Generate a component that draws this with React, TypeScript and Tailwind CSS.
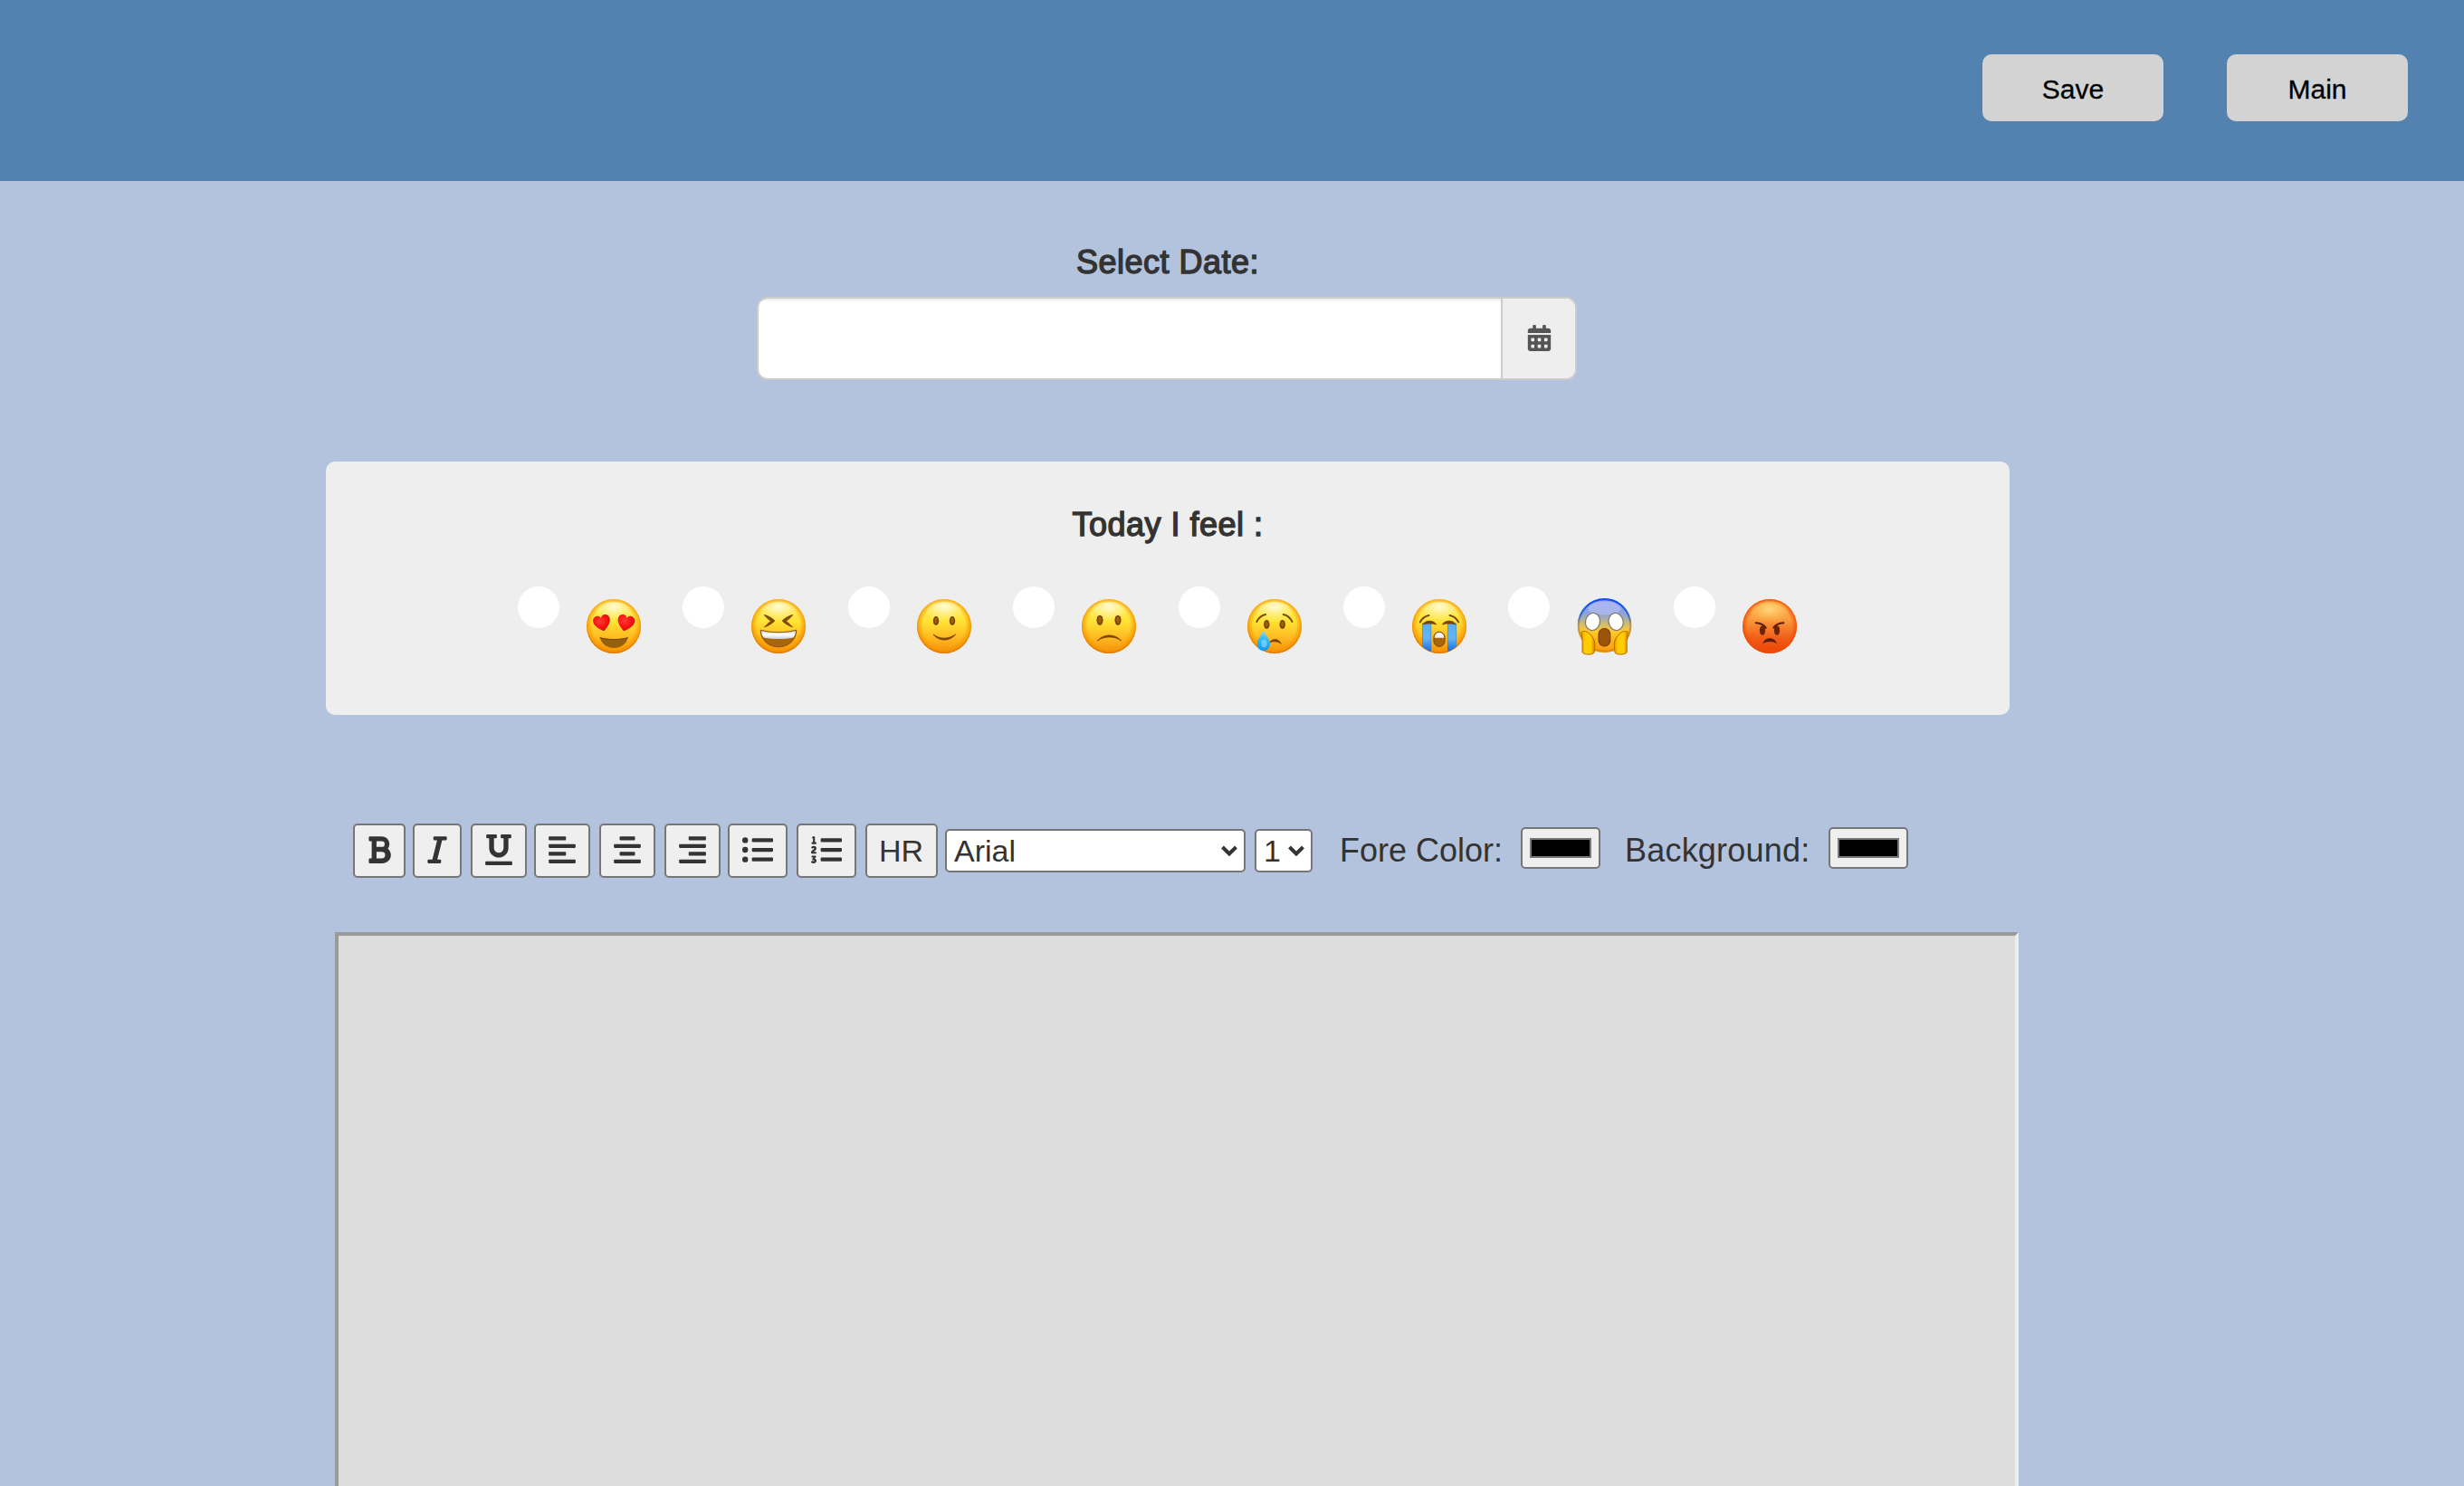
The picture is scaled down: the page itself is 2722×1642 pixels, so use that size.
import type { ReactNode } from "react";
import {
  FaAlignCenter,
  FaAlignLeft,
  FaAlignRight,
  FaBold,
  FaCalendarAlt,
  FaItalic,
  FaListOl,
  FaListUl,
  FaUnderline,
} from "react-icons/fa";

const BROWN = "#7a4300";

/* Shared gradients for the mood faces. */
function FaceDefs() {
  return (
    <svg className="absolute size-0" aria-hidden="true">
      <defs>
        <linearGradient id="yellow" x1="0" y1="0" x2="0" y2="1">
          <stop offset="0" stopColor="#fff06a" />
          <stop offset="0.42" stopColor="#ffe233" />
          <stop offset="0.72" stopColor="#ffb820" />
          <stop offset="1" stopColor="#f5900c" />
        </linearGradient>
        <radialGradient id="rim" cx="0.5" cy="0.48" r="0.52">
          <stop offset="0.74" stopColor="#f79a00" stopOpacity="0" />
          <stop offset="0.9" stopColor="#f79600" stopOpacity="0.65" />
          <stop offset="1" stopColor="#dc7400" stopOpacity="1" />
        </radialGradient>
        <radialGradient id="shine" cx="0.5" cy="0.2" r="0.6">
          <stop offset="0" stopColor="#fffbe0" stopOpacity="0.95" />
          <stop offset="1" stopColor="#fff59a" stopOpacity="0" />
        </radialGradient>
        <linearGradient id="scream" x1="0" y1="0" x2="0" y2="1">
          <stop offset="0" stopColor="#8f9ff5" />
          <stop offset="0.28" stopColor="#8ea2dc" />
          <stop offset="0.5" stopColor="#d9bf62" />
          <stop offset="0.62" stopColor="#ffc928" />
          <stop offset="1" stopColor="#f9990f" />
        </linearGradient>
        <linearGradient id="screamRim" x1="0" y1="0" x2="0" y2="1">
          <stop offset="0" stopColor="#0f4dff" />
          <stop offset="0.3" stopColor="#2c6fd8" />
          <stop offset="0.5" stopColor="#c79a38" />
          <stop offset="1" stopColor="#e58a0a" />
        </linearGradient>
        <linearGradient id="angry" x1="0" y1="0" x2="0" y2="1">
          <stop offset="0" stopColor="#ffb84a" />
          <stop offset="0.35" stopColor="#fb9f40" />
          <stop offset="0.7" stopColor="#f2601a" />
          <stop offset="1" stopColor="#e93f04" />
        </linearGradient>
        <radialGradient id="angryRim" cx="0.5" cy="0.5" r="0.5">
          <stop offset="0.8" stopColor="#f4580c" stopOpacity="0" />
          <stop offset="1" stopColor="#ee4a06" stopOpacity="0.9" />
        </radialGradient>
        <radialGradient id="angryShine" cx="0.5" cy="0.35" r="0.6">
          <stop offset="0" stopColor="#ffdc80" stopOpacity="0.95" />
          <stop offset="1" stopColor="#ffc060" stopOpacity="0" />
        </radialGradient>
        <radialGradient id="heart" cx="0.4" cy="0.35" r="0.7">
          <stop offset="0" stopColor="#ff3b35" />
          <stop offset="0.6" stopColor="#f5100f" />
          <stop offset="1" stopColor="#d10a12" />
        </radialGradient>
        <linearGradient id="tear" x1="0" y1="0" x2="0" y2="1">
          <stop offset="0" stopColor="#9adcf8" />
          <stop offset="0.45" stopColor="#35b9f7" />
          <stop offset="1" stopColor="#0a98f0" />
        </linearGradient>
        <linearGradient id="stream" x1="0" y1="0" x2="0" y2="1">
          <stop offset="0" stopColor="#58aef0" />
          <stop offset="0.5" stopColor="#62b4f8" />
          <stop offset="1" stopColor="#0a5fdc" />
        </linearGradient>
        <linearGradient id="hand" x1="0" y1="0" x2="1" y2="0">
          <stop offset="0" stopColor="#e99a00" />
          <stop offset="0.3" stopColor="#ffcf00" />
          <stop offset="0.7" stopColor="#ffcc00" />
          <stop offset="1" stopColor="#d98200" />
        </linearGradient>
        <linearGradient id="teeth" x1="0" y1="0" x2="0" y2="1">
          <stop offset="0" stopColor="#d5d8e0" />
          <stop offset="0.5" stopColor="#ffffff" />
          <stop offset="1" stopColor="#c9cdd8" />
        </linearGradient>
        <clipPath id="faceClip">
          <circle cx="30" cy="30" r="29.5" />
        </clipPath>
      </defs>
    </svg>
  );
}

function YellowFace({ children }: { children: ReactNode }) {
  return (
    <svg viewBox="0 0 60 60" className="size-full overflow-visible">
      <circle cx="30" cy="30" r="30" fill="url(#yellow)" />
      <circle cx="30" cy="30" r="30" fill="url(#rim)" />
      <ellipse cx="30" cy="17" rx="21" ry="14" fill="url(#shine)" />
      {children}
    </svg>
  );
}

function Eye({ cx, cy, rx = 3.2, ry = 5.1 }: { cx: number; cy: number; rx?: number; ry?: number }) {
  return (
    <g>
      <ellipse cx={cx} cy={cy} rx={rx} ry={ry} fill={BROWN} />
      <ellipse cx={cx} cy={cy - 0.4} rx={rx - 1.6} ry={ry - 2} fill="#a05f08" />
    </g>
  );
}

function Line({ d, width = 1.8 }: { d: string; width?: number }) {
  return (
    <path d={d} fill="none" stroke={BROWN} strokeWidth={width} strokeLinecap="round" strokeLinejoin="round" />
  );
}

const HEART =
  "M0 9.2C-3.5 6.4-9.4 2-9.4-3.2C-9.4-6.6-7-8.6-4.4-8.6C-2.3-8.6-.8-7.5 0-5.6C.8-7.5 2.3-8.6 4.4-8.6C7-8.6 9.4-6.6 9.4-3.2C9.4 2 3.5 6.4 0 9.2Z";

const HeartEyes = () => (
  <YellowFace>
    <path d={HEART} transform="translate(17.2 26.4) rotate(-13)" fill="url(#heart)" />
    <path d={HEART} transform="translate(43.2 26.4) rotate(13)" fill="url(#heart)" />
    <path d="M14.7 42.6C24 45 36.5 45 45.7 42.6C44 50 37.5 54 30.2 54C23 54 16.5 50 14.7 42.6Z" fill="#95600c" />
    <path d="M14.7 42.6C24 45.2 36.5 45.2 45.7 42.6" fill="none" stroke={BROWN} strokeWidth="1" />
  </YellowFace>
);

const Laughing = () => (
  <YellowFace>
    <path d="M14 17.3C18.5 18.2 22.5 20.5 26 24C22.5 27.5 18.5 29.8 14.3 31C16.5 28.5 19 26.2 21.5 24.2C18.7 22.5 16 20 14 17.3Z" fill="#80490a" stroke={BROWN} strokeWidth="0.6" />
    <path d="M46 17.3C41.5 18.2 37.5 20.5 34 24C37.5 27.5 41.5 29.8 45.7 31C43.5 28.5 41 26.2 38.5 24.2C41.3 22.5 44 20 46 17.3Z" fill="#80490a" stroke={BROWN} strokeWidth="0.6" />
    <path d="M10.2 34.2C22 37.5 38 37.5 49.8 34.2C49.5 46 40.5 52.8 30 52.8C19.5 52.8 10.5 46 10.2 34.2Z" fill="#a9650a" stroke={BROWN} strokeWidth="0.8" />
    <path d="M11 35C22 38 38 38 49 35C48.8 38 48 40.5 46.5 42.5C36 44.6 24 44.6 13.5 42.5C12 40.5 11.2 38 11 35Z" fill="url(#teeth)" />
  </YellowFace>
);

const Smiling = () => (
  <YellowFace>
    <Eye cx={21} cy={24} />
    <Eye cx={39} cy={24} />
    <path d="M18 39C25 44.6 35 44.6 42.5 39C36 47 24.5 47 18 39Z" fill={BROWN} stroke={BROWN} strokeWidth="0.9" />
  </YellowFace>
);

const Frowning = () => (
  <YellowFace>
    <Eye cx={20} cy={23.3} rx={3.5} ry={5.6} />
    <Eye cx={40} cy={23.3} rx={3.5} ry={5.6} />
    <path d="M17.3 46C24.5 38 36.5 38 43.7 46C36 40.5 25 40.5 17.3 46Z" fill={BROWN} stroke={BROWN} strokeWidth="0.8" />
  </YellowFace>
);

const Crying = () => (
  <YellowFace>
    <Line d="M10.3 25C12.5 20.5 15.5 17.8 20.2 17" />
    <Line d="M49.5 25C47.3 20.5 44.3 17.8 39.6 17" />
    <Eye cx={21.3} cy={28} />
    <Eye cx={38.7} cy={28} />
    <path d="M24 48.5C26 42.5 35.5 42.3 38 50.3C34 46.5 29 46.5 24 48.5Z" fill={BROWN} />
    <path d="M17.7 33.8C19.5 40 25 44 25 49.5C25 54 21.7 57 17.8 57C13.8 57 10.7 54 10.7 49.5C10.7 44 16 40 17.7 33.8Z" fill="url(#tear)" />
    <ellipse cx="18.5" cy="49" rx="3.2" ry="4.5" fill="#7ed5fb" opacity="0.75" />
  </YellowFace>
);

const Sobbing = () => (
  <YellowFace>
    <g clipPath="url(#faceClip)">
      <rect x="11.3" y="27" width="9.6" height="33" fill="url(#stream)" stroke="#4a80b0" strokeWidth="0.6" />
      <rect x="39.2" y="27" width="9.6" height="33" fill="url(#stream)" stroke="#4a80b0" strokeWidth="0.6" />
    </g>
    <Line d="M8.7 25.5C11 21.3 14 18.7 18.5 18" />
    <Line d="M51.3 25.5C49 21.3 46 18.7 41.5 18" />
    <path d="M11.7 28C14.5 22.8 24 22.8 26.7 28.2C22 26.6 16.5 26.6 11.7 28Z" fill={BROWN} stroke={BROWN} strokeWidth="0.6" />
    <path d="M48.3 28C45.5 22.8 36 22.8 33.3 28.2C38 26.6 43.5 26.6 48.3 28Z" fill={BROWN} stroke={BROWN} strokeWidth="0.6" />
    <rect x="23.9" y="36.2" width="12.2" height="16.2" rx="6" fill="#a9650a" stroke="#7f4a08" strokeWidth="1" />
    <path d="M24.8 42.8C24.8 39 27 37 30 37C33 37 35.2 39 35.2 42.8Z" fill="#f5f5f7" />
  </YellowFace>
);

const Screaming = () => (
  <svg viewBox="0 0 60 60" className="size-full overflow-visible">
    <g transform="translate(0.8 0)">
      <circle cx="29.7" cy="29" r="28.8" fill="url(#scream)" stroke="url(#screamRim)" strokeWidth="2.2" />
      <ellipse cx="29.7" cy="10" rx="18" ry="7.5" fill="#d9dcff" opacity="0.35" />
      <ellipse cx="16.7" cy="25" rx="8" ry="9.6" transform="rotate(14 16.7 25)" fill="#fff" stroke="#837d69" strokeWidth="1.3" />
      <ellipse cx="42.3" cy="25" rx="8" ry="9.6" transform="rotate(-14 42.3 25)" fill="#fff" stroke="#837d69" strokeWidth="1.3" />
      <rect x="23.2" y="32.5" width="12.8" height="19.5" rx="6.2" fill="#9c5207" stroke="#7a3f04" strokeWidth="1.1" />
      <path d="M4 36.5C6 34.5 11 35.5 14 39C18 43.5 19.5 47 19 52L18.5 58.5C18 62 6 62 5.2 58.5C5 51 6 44 4 36.5Z" fill="url(#hand)" stroke="#b86b00" strokeWidth="1" />
      <path d="M55.6 36.5C53.6 34.5 48.6 35.5 45.6 39C41.6 43.5 40.1 47 40.6 52L41.1 58.5C41.6 62 53.6 62 54.4 58.5C54.6 51 53.6 44 55.6 36.5Z" fill="url(#hand)" stroke="#b86b00" strokeWidth="1" />
    </g>
  </svg>
);

const Angry = () => (
  <svg viewBox="0 0 60 60" className="size-full overflow-visible">
    <circle cx="30" cy="30" r="30" fill="url(#angry)" />
    <circle cx="30" cy="30" r="30" fill="url(#angryRim)" />
    <ellipse cx="30" cy="15" rx="21" ry="12.5" fill="url(#angryShine)" />
    <ellipse cx="22" cy="34.5" rx="3.2" ry="5.2" fill="#6b2408" />
    <ellipse cx="38" cy="34.5" rx="3.2" ry="5.2" fill="#6b2408" />
    <path d="M14.7 26.3C19.5 26.6 23.5 28.3 25.8 31.7" fill="none" stroke="#5d1d05" strokeWidth="2" strokeLinecap="round" />
    <path d="M45.3 26.3C40.5 26.6 36.5 28.3 34.2 31.7" fill="none" stroke="#5d1d05" strokeWidth="2" strokeLinecap="round" />
    <path d="M22.3 49.2C24.5 41.2 35.5 41.2 38 49.2C33.5 46.2 27 46.2 22.3 49.2Z" fill="#5d1d05" />
  </svg>
);

const MOODS = [HeartEyes, Laughing, Smiling, Frowning, Crying, Sobbing, Screaming, Angry];

function ToolButton({ className, children }: { className: string; children: ReactNode }) {
  return (
    <button
      type="button"
      className={`flex h-[60px] shrink-0 items-center justify-center rounded-[5px] border-2 border-[#767676] bg-[#efefef] text-[34px] leading-none text-[#333] ${className}`}
    >
      {children}
    </button>
  );
}

function Chevron() {
  return (
    <svg viewBox="0 0 20 14" className="h-[14px] w-[20px] shrink-0">
      <path d="M2.5 3L10 10.5L17.5 3" fill="none" stroke="#333" strokeWidth="4" />
    </svg>
  );
}

function Dropdown({ value, className }: { value: string; className: string }) {
  return (
    <div
      className={`mt-[6px] flex h-12 shrink-0 items-center justify-between rounded-[5px] border-2 border-[#767676] bg-white text-[34px] leading-[44px] ${className}`}
    >
      <span>{value}</span>
      <Chevron />
    </div>
  );
}

function ColorInput() {
  return (
    <button
      type="button"
      className="mt-1 flex h-[46px] w-[88px] shrink-0 items-center justify-center rounded-[5px] border-2 border-[#767676] bg-[#efefef]"
    >
      <span className="h-[22px] w-[68px] border-2 border-[#777] bg-black" />
    </button>
  );
}

export default function App() {
  return (
    <div className="flex h-[1642px] w-full flex-col overflow-hidden bg-[#b3c3dd] font-['Liberation_Sans',Arial,sans-serif] text-[#333]">
      <header className="flex h-[200px] shrink-0 justify-end gap-[70px] bg-[#5382b1] pt-[60px] pr-[62px]">
        {["Save", "Main"].map((label) => (
          <button
            key={label}
            type="button"
            className="h-[74px] w-[200px] rounded-[10px] bg-[#d3d3d3] pt-[4px] text-[30px] leading-none text-black [-webkit-text-stroke:0.3px_#000]"
          >
            {label}
          </button>
        ))}
      </header>

      <main className="ml-[360px] flex w-[1860px] flex-col">
        <section className="flex flex-col items-center pt-[70px]">
          <label className="h-10 text-[36px] leading-10 tracking-[0.5px] [-webkit-text-stroke:1.4px_#333]">
            Select Date:
          </label>
          <div className="mt-[18px] mr-[2px] flex h-[92px] w-[906px] overflow-hidden rounded-[12px] border-2 border-[#ccc] bg-white">
            <div className="flex-1 shadow-[inset_0_2px_2px_rgba(0,0,0,0.075)]" />
            <div className="flex w-[82px] items-center justify-center border-l-2 border-[#ccc] bg-[#eee] pb-[1px] text-[29px] text-[#555]">
              <FaCalendarAlt />
            </div>
          </div>
        </section>

        <section className="mt-[90px] flex h-[280px] flex-col rounded-[10px] bg-[#eee] pt-[50px]">
          <h2 className="h-10 text-center text-[36px] leading-10 tracking-[0.5px] [-webkit-text-stroke:1.4px_#333]">
            Today I feel :
          </h2>
          <FaceDefs />
          <div className="mt-12 ml-[212px] flex">
            {MOODS.map((Mood, i) => (
              <label key={i} className="flex w-[182.4px] shrink-0">
                <span className="size-[46px] rounded-full bg-white" />
                <span className="mt-[14px] ml-[30px] size-[60px]">
                  <Mood />
                </span>
              </label>
            ))}
          </div>
        </section>

        <section className="mt-[120px] ml-[30px] flex h-[60px] items-start">
          <ToolButton className="w-[58px] pb-[2px]"><FaBold /></ToolButton>
          <ToolButton className="ml-2 w-[54px] pb-[2px]"><FaItalic /></ToolButton>
          <ToolButton className="ml-[10px] w-[62px] pb-[2px]"><FaUnderline /></ToolButton>
          <ToolButton className="ml-2 w-[62px] pb-[2px]"><FaAlignLeft /></ToolButton>
          <ToolButton className="ml-[10px] w-[62px] pb-[2px]"><FaAlignCenter /></ToolButton>
          <ToolButton className="ml-[10px] w-[62px] pb-[2px]"><FaAlignRight /></ToolButton>
          <ToolButton className="ml-2 w-[66px] pb-[2px]"><FaListUl /></ToolButton>
          <ToolButton className="ml-[10px] w-[66px] pb-[2px]"><FaListOl /></ToolButton>
          <ToolButton className="ml-[10px] w-[80px] pr-[1px]">HR</ToolButton>
          <Dropdown value="Arial" className="ml-2 w-[332px] pr-[6px] pl-[8px]" />
          <Dropdown value="1" className="ml-[10px] w-[64px] pr-[6px] pl-[8px]" />
          <span className="ml-[30px] w-[200px] text-[36px] leading-[60px]">Fore Color:</span>
          <ColorInput />
          <span className="ml-[27px] w-[225px] text-[36px] leading-[60px] tracking-[0.2px]">Background:</span>
          <ColorInput />
        </section>

        <div className="mt-[60px] ml-[10px] h-[800px] w-[1860px] shrink-0 border-4 border-t-[#9a9a9a] border-r-[#eee] border-b-[#eee] border-l-[#9a9a9a] bg-[#ddd]" />
      </main>
    </div>
  );
}
